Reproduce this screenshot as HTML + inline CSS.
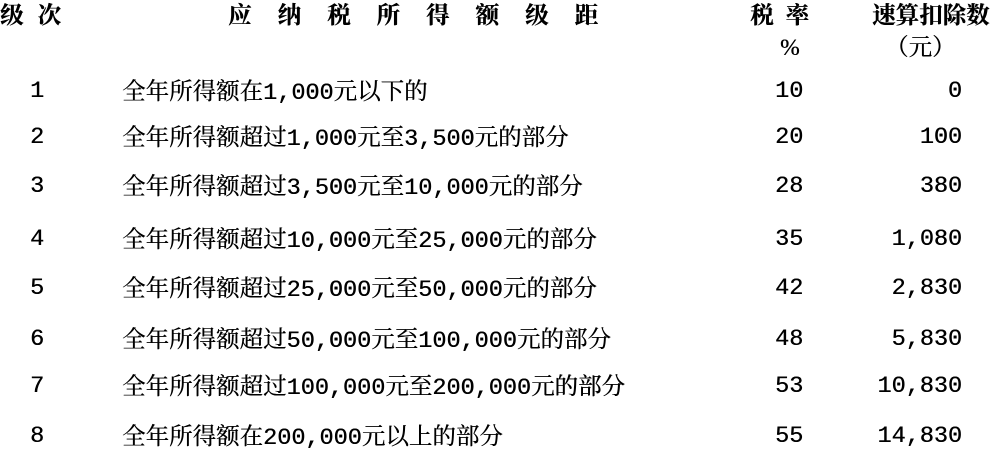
<!DOCTYPE html>
<html><head><meta charset="utf-8"><style>
body{margin:0;width:1000px;height:449px;background:#fff;position:relative;overflow:hidden;color:#000;font-family:"Liberation Serif","Noto Serif CJK SC","Noto Sans CJK SC",serif;}
.a{position:absolute;white-space:nowrap;font-size:23.5px;line-height:24px;text-shadow:0.4px 0 0 #000;}
.m{font-family:"Liberation Mono","Noto Serif CJK SC",monospace;}
.r{text-align:right;}
.h{font-weight:bold;}
</style></head><body>
<div class="a h" style="left:0;top:4px;letter-spacing:14px">级次</div>
<div class="a h" style="left:228px;top:4px;letter-spacing:26px">应纳税所得额级距</div>
<div class="a h" style="left:750px;top:4px;letter-spacing:12px">税率</div>
<div class="a" style="left:780px;top:36px">%</div>
<div class="a h" style="left:872px;top:4px;letter-spacing:0px">速算扣除数</div>
<div class="a" style="left:885px;top:36px">（元）</div>

<div class="a m" style="left:30px;top:80px">1</div>
<div class="a" style="left:122px;top:80px">全年所得额在<span class="m">1,000</span>元以下的</div>
<div class="a m" style="left:775px;top:80px">10</div>
<div class="a m r" style="left:862px;width:100px;top:80px">0</div>

<div class="a m" style="left:30px;top:126px">2</div>
<div class="a" style="left:122px;top:126px">全年所得额超过<span class="m">1,000</span>元至<span class="m">3,500</span>元的部分</div>
<div class="a m" style="left:775px;top:126px">20</div>
<div class="a m r" style="left:862px;width:100px;top:126px">100</div>

<div class="a m" style="left:30px;top:175px">3</div>
<div class="a" style="left:122px;top:175px">全年所得额超过<span class="m">3,500</span>元至<span class="m">10,000</span>元的部分</div>
<div class="a m" style="left:775px;top:175px">28</div>
<div class="a m r" style="left:862px;width:100px;top:175px">380</div>

<div class="a m" style="left:30px;top:228px">4</div>
<div class="a" style="left:122px;top:228px">全年所得额超过<span class="m">10,000</span>元至<span class="m">25,000</span>元的部分</div>
<div class="a m" style="left:775px;top:228px">35</div>
<div class="a m r" style="left:862px;width:100px;top:228px">1,080</div>

<div class="a m" style="left:30px;top:277px">5</div>
<div class="a" style="left:122px;top:277px">全年所得额超过<span class="m">25,000</span>元至<span class="m">50,000</span>元的部分</div>
<div class="a m" style="left:775px;top:277px">42</div>
<div class="a m r" style="left:862px;width:100px;top:277px">2,830</div>

<div class="a m" style="left:30px;top:328px">6</div>
<div class="a" style="left:122px;top:328px">全年所得额超过<span class="m">50,000</span>元至<span class="m">100,000</span>元的部分</div>
<div class="a m" style="left:775px;top:328px">48</div>
<div class="a m r" style="left:862px;width:100px;top:328px">5,830</div>

<div class="a m" style="left:30px;top:375px">7</div>
<div class="a" style="left:122px;top:375px">全年所得额超过<span class="m">100,000</span>元至<span class="m">200,000</span>元的部分</div>
<div class="a m" style="left:775px;top:375px">53</div>
<div class="a m r" style="left:862px;width:100px;top:375px">10,830</div>

<div class="a m" style="left:30px;top:425px">8</div>
<div class="a" style="left:122px;top:425px">全年所得额在<span class="m">200,000</span>元以上的部分</div>
<div class="a m" style="left:775px;top:425px">55</div>
<div class="a m r" style="left:862px;width:100px;top:425px">14,830</div>
</body></html>
